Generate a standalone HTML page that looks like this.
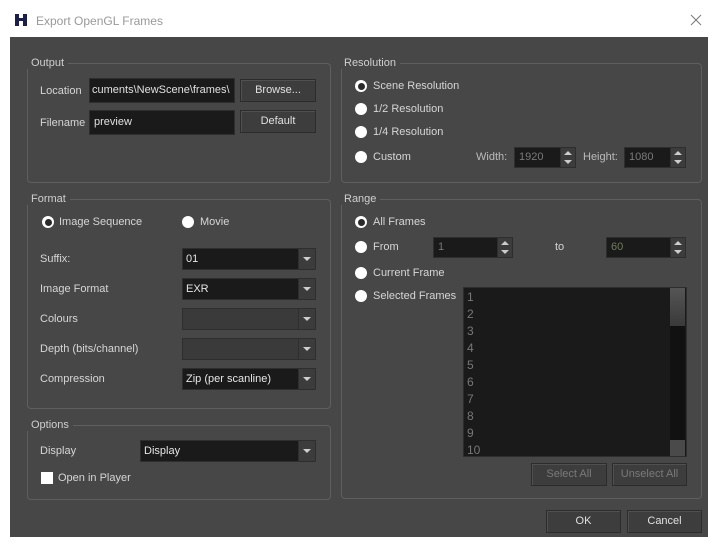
<!DOCTYPE html>
<html><head><meta charset="utf-8"><style>
*{box-sizing:border-box;margin:0;padding:0}
body{width:718px;height:547px;background:#fff;position:relative;overflow:hidden;font-family:"Liberation Sans",sans-serif;font-size:11px;color:#d6d6d6}
.a{position:absolute}
.dark{left:10px;top:37px;width:698px;height:500px;background:#474747}
.grp{position:absolute;border:1px solid #5f5f5f;border-radius:4px}
.gt{position:absolute;background:#474747;padding:0 4px;color:#cfcfcf;font-size:11px;line-height:12px}
.in{position:absolute;background:#1a1a1a;border:1px solid #2e2e2e;color:#e0e0e0;padding-left:4px;line-height:20px}
.btn{position:absolute;background:#3d3d3d;border:1px solid #2c2c2c;box-shadow:inset 1px 1px 0 #505050;color:#e0e0e0;text-align:center;line-height:20px}
.dis{color:#7a7a7a}
.rad{position:absolute;width:12px;height:12px;border-radius:50%;background:#fff}
.rad.on::after{content:"";position:absolute;left:2.5px;top:2.5px;width:7px;height:7px;border-radius:50%;background:#2a2a2a}
.lbl{position:absolute;line-height:14px}
.cb{position:absolute;background:#1a1a1a;border:1px solid #2e2e2e;height:22px;color:#e6e6e6;padding-left:3px;line-height:20px}
.cb.e{background:#3a3a3a}
.cb::after{content:"";position:absolute;right:0;top:0;width:16px;height:20px;background:#3c3c3c;border-left:1px solid #2e2e2e}
.cb::before{content:"";position:absolute;right:4px;top:8px;border-left:4px solid transparent;border-right:4px solid transparent;border-top:4px solid #cfcfcf;z-index:2}
.sp{position:absolute;width:16px;background:#3c3c3c;border:1px solid #2e2e2e}
.sp i{position:absolute;left:3px;border-left:4px solid transparent;border-right:4px solid transparent}
</style></head><body>
<div class="a" style="left:14px;top:13px;width:14px;height:14px">
<svg width="14" height="14" viewBox="0 0 14 14"><path d="M1 1h4v4h4V1h4v12H9V8H5v5H1z" fill="#1c1f4a"/></svg></div>
<div class="a" style="left:36px;top:14px;color:#999;font-size:12px">Export OpenGL Frames</div>
<div class="a" style="left:690px;top:14px;width:12px;height:12px"><svg width="12" height="12" viewBox="0 0 12 12"><path d="M1 1L11 11M11 1L1 11" stroke="#777" stroke-width="1"/></svg></div>
<div class="a dark"></div>

<div class="grp" style="left:27px;top:63px;width:304px;height:120px"></div><div class="gt" style="left:27px;top:57px">Output</div>
<div class="grp" style="left:341px;top:63px;width:361px;height:120px"></div><div class="gt" style="left:340px;top:57px">Resolution</div>
<div class="grp" style="left:27px;top:199px;width:304px;height:210px"></div><div class="gt" style="left:27px;top:193px">Format</div>
<div class="grp" style="left:341px;top:199px;width:361px;height:300px"></div><div class="gt" style="left:340px;top:193px">Range</div>
<div class="grp" style="left:27px;top:425px;width:304px;height:75px"></div><div class="gt" style="left:27px;top:419px">Options</div>

<div class="lbl" style="left:40px;top:84px">Location</div>
<div class="in" style="left:89px;top:78px;width:146px;height:25px;line-height:23px;overflow:hidden;white-space:nowrap;padding-left:2px">cuments\NewScene\frames\</div>
<div class="btn" style="left:240px;top:79px;width:76px;height:23px">Browse...</div>
<div class="lbl" style="left:40px;top:116px">Filename</div>
<div class="in" style="left:89px;top:110px;width:146px;height:25px;line-height:23px">preview</div>
<div class="btn" style="left:240px;top:110px;width:76px;height:23px">Default</div>

<div class="rad on" style="left:355px;top:80px"></div><div class="lbl" style="left:373px;top:79px">Scene Resolution</div>
<div class="rad" style="left:355px;top:103px"></div><div class="lbl" style="left:373px;top:102px">1/2 Resolution</div>
<div class="rad" style="left:355px;top:126px"></div><div class="lbl" style="left:373px;top:125px">1/4 Resolution</div>
<div class="rad" style="left:355px;top:151px"></div><div class="lbl" style="left:373px;top:150px">Custom</div>
<div class="lbl" style="left:476px;top:150px;color:#bbb">Width:</div>
<div class="in dis" style="left:514px;top:147px;width:47px;height:21px;line-height:19px">1920</div>
<div class="sp" style="left:560px;top:147px;height:21px"><i style="top:3px;border-bottom:4px solid #ccc"></i><i style="top:12px;border-top:4px solid #ccc"></i></div>
<div class="lbl" style="left:583px;top:150px;color:#bbb">Height:</div>
<div class="in dis" style="left:624px;top:147px;width:47px;height:21px;line-height:19px">1080</div>
<div class="sp" style="left:670px;top:147px;height:21px"><i style="top:3px;border-bottom:4px solid #ccc"></i><i style="top:12px;border-top:4px solid #ccc"></i></div>

<div class="rad on" style="left:42px;top:216px"></div><div class="lbl" style="left:59px;top:215px">Image Sequence</div>
<div class="rad" style="left:182px;top:216px"></div><div class="lbl" style="left:200px;top:215px">Movie</div>
<div class="lbl" style="left:40px;top:252px">Suffix:</div><div class="cb" style="left:182px;top:248px;width:134px">01</div>
<div class="lbl" style="left:40px;top:282px">Image Format</div><div class="cb" style="left:182px;top:278px;width:134px">EXR</div>
<div class="lbl" style="left:40px;top:312px">Colours</div><div class="cb e" style="left:182px;top:308px;width:134px"></div>
<div class="lbl" style="left:40px;top:342px">Depth (bits/channel)</div><div class="cb e" style="left:182px;top:338px;width:134px"></div>
<div class="lbl" style="left:40px;top:372px">Compression</div><div class="cb" style="left:182px;top:368px;width:134px">Zip (per scanline)</div>

<div class="lbl" style="left:40px;top:444px">Display</div><div class="cb" style="left:140px;top:440px;width:176px">Display</div>
<div class="a" style="left:41px;top:472px;width:12px;height:12px;background:#fff"></div><div class="lbl" style="left:58px;top:471px">Open in Player</div>

<div class="rad on" style="left:355px;top:216px"></div><div class="lbl" style="left:373px;top:215px">All Frames</div>
<div class="rad" style="left:355px;top:241px"></div><div class="lbl" style="left:373px;top:240px">From</div>
<div class="in" style="left:433px;top:237px;width:65px;height:21px;line-height:19px;color:#777">1</div>
<div class="sp" style="left:497px;top:237px;height:21px"><i style="top:3px;border-bottom:4px solid #ccc"></i><i style="top:12px;border-top:4px solid #ccc"></i></div>
<div class="lbl" style="left:555px;top:240px">to</div>
<div class="in" style="left:606px;top:237px;width:65px;height:21px;line-height:19px;color:#6f7a5e">60</div>
<div class="sp" style="left:670px;top:237px;height:21px"><i style="top:3px;border-bottom:4px solid #ccc"></i><i style="top:12px;border-top:4px solid #ccc"></i></div>
<div class="rad" style="left:355px;top:267px"></div><div class="lbl" style="left:373px;top:266px">Current Frame</div>
<div class="rad" style="left:355px;top:290px"></div><div class="lbl" style="left:373px;top:289px">Selected Frames</div>
<div class="a" style="left:463px;top:287px;width:224px;height:170px;background:#1a1a1a;border:1px solid #2e2e2e;color:#777;font-size:12px;line-height:17px;padding:1px 0 0 3px">1<br>2<br>3<br>4<br>5<br>6<br>7<br>8<br>9<br>10</div>
<div class="a" style="left:670px;top:288px;width:15px;height:168px;background:#111"></div>
<div class="a" style="left:670px;top:288px;width:15px;height:38px;background:linear-gradient(#555,#3a3a3a)"></div>
<div class="a" style="left:670px;top:440px;width:15px;height:16px;background:#4a4a4a"></div>
<div class="btn dis" style="left:531px;top:463px;width:76px;height:23px">Select All</div>
<div class="btn dis" style="left:612px;top:463px;width:75px;height:23px">Unselect All</div>

<div class="btn" style="left:546px;top:510px;width:75px;height:23px">OK</div>
<div class="btn" style="left:627px;top:510px;width:75px;height:23px">Cancel</div>
</body></html>
